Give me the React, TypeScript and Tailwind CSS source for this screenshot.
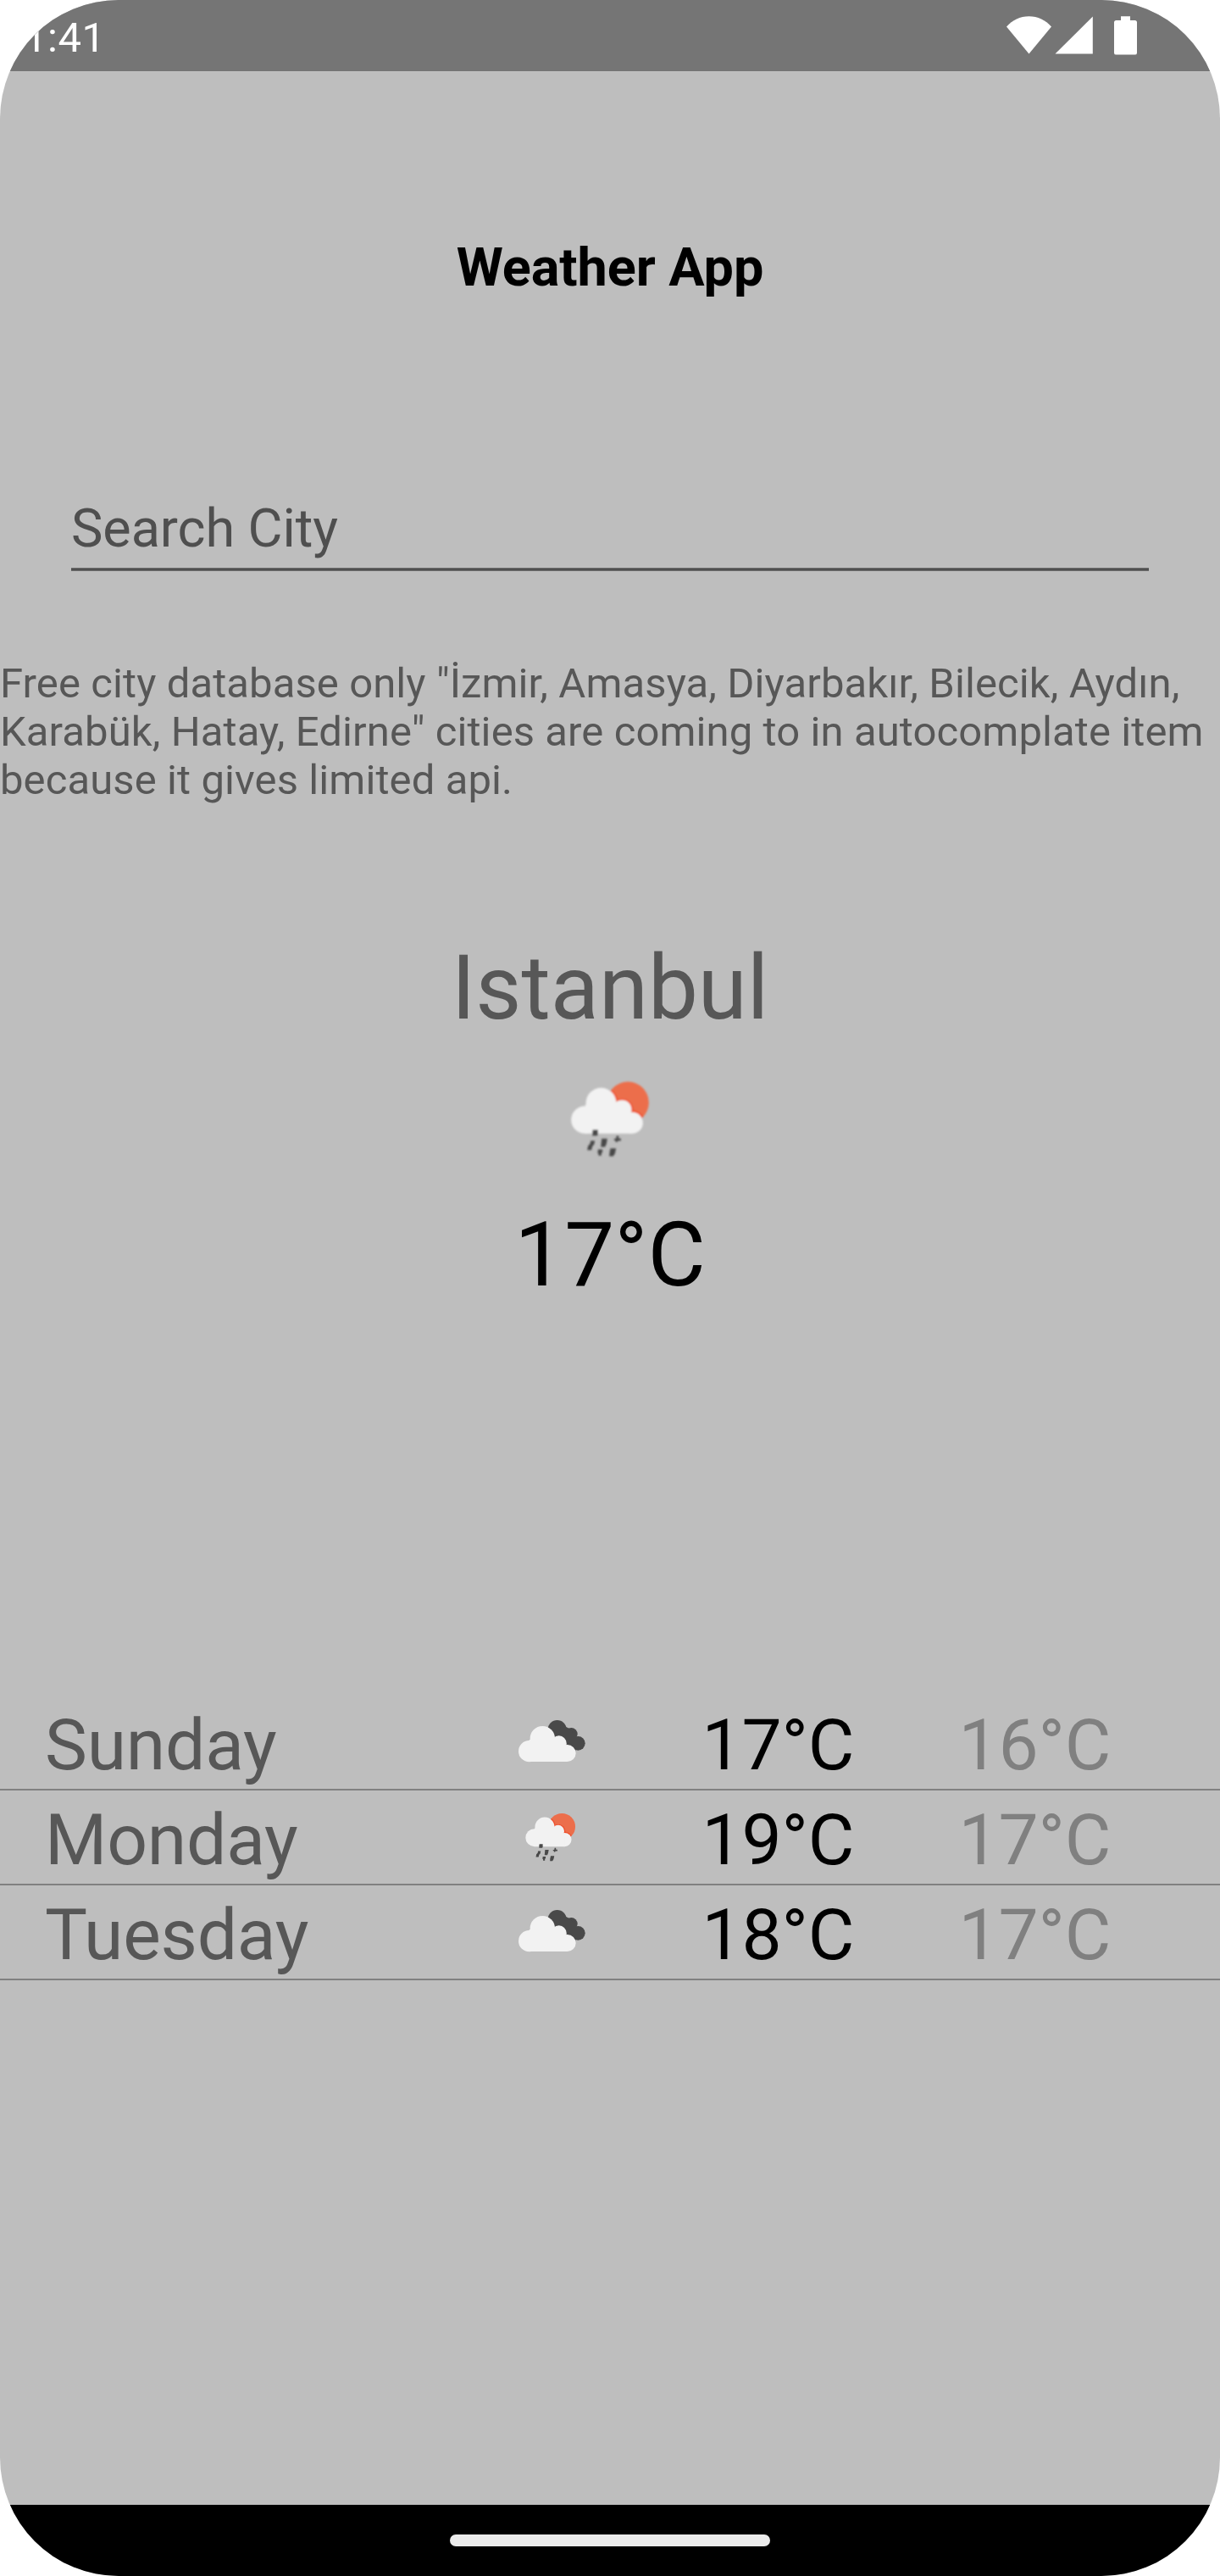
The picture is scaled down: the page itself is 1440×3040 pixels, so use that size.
import React from "react";

type Condition = "clouds" | "rain";

interface Day {
  name: string;
  condition: Condition;
  high: string;
  low: string;
}

const days: Day[] = [
  { name: "Sunday", condition: "clouds", high: "17°C", low: "16°C" },
  { name: "Monday", condition: "rain", high: "19°C", low: "17°C" },
  { name: "Tuesday", condition: "clouds", high: "18°C", low: "17°C" },
];

function RainIcon({ className }: { className: string }) {
  return (
    <svg viewBox="-22.5 -13.5 525 525" className={className} aria-hidden="true">
      <defs>
        <filter id="rain-soft" x="-5%" y="-5%" width="110%" height="110%">
          <feGaussianBlur stdDeviation="3" />
        </filter>
        <clipPath id="sun-clip">
          <circle cx="302" cy="182" r="74" />
        </clipPath>
      </defs>
      <g filter="url(#rain-soft)">
        <circle cx="302" cy="182" r="74" fill="#ec6e4c" />
        <g clipPath="url(#sun-clip)" fill="#ee4f2c">
          <circle cx="208" cy="184" r="59" />
          <circle cx="282" cy="208" r="39" />
          <circle cx="318" cy="254" r="44" />
        </g>
        <g fill="#f2f2f2">
          <circle cx="150" cy="243" r="49" />
          <circle cx="207" cy="184" r="54" />
          <circle cx="281" cy="207" r="34" />
          <circle cx="317" cy="254" r="38" />
          <path d="M151 190H300L317 240V292H151Z" />
        </g>
        <g fill="#484848">
          <path d="M178 278h18v15l-3 6h-17v-14z" />
          <path d="M170 317h15l-3 14-6 6-3 13h-15l3-15 7-7z" />
          <path d="M209 310h20l-3 18-5 11h-15z" />
          <path d="M262 299h7v10h8v8h-10l-3 5h-6v-6h-5v-6h7z" />
          <path d="M196 348h16v8l-4 6v8h-10v-8h-3z" />
          <path d="M240 344h20l-4 18-6 10h-14l1-14z" />
        </g>
      </g>
    </svg>
  );
}

function CloudsIcon({ className }: { className: string }) {
  return (
    <svg viewBox="42 37 336 336" className={className} aria-hidden="true">
      <defs>
        <filter id="clouds-soft" x="-5%" y="-5%" width="110%" height="110%">
          <feGaussianBlur stdDeviation="1.5" />
        </filter>
      </defs>
      <g filter="url(#clouds-soft)">
        <g fill="#484848">
          <circle cx="233" cy="154" r="33" />
          <circle cx="283" cy="170" r="22" />
          <circle cx="307" cy="203" r="25" />
          <path d="M245 135L275 150 300 175 300 228 240 190Z" />
        </g>
        <g fill="#f2f2f2">
          <circle cx="134" cy="231" r="38" />
          <circle cx="181" cy="186" r="44" />
          <circle cx="239" cy="203" r="27" />
          <circle cx="269" cy="238" r="30" />
          <path d="M134 190H252L269 225V268H134Z" />
        </g>
      </g>
    </svg>
  );
}

function WeatherIcon({ condition, className }: { condition: Condition; className: string }) {
  return condition === "rain" ? <RainIcon className={className} /> : <CloudsIcon className={className} />;
}

function StatusBar() {
  return (
    <header className="flex h-[84px] shrink-0 items-start justify-between bg-[#757575] pr-[98px] pl-[28px] text-white">
      <span className="mt-[16px] text-[49px] leading-[57px] tracking-[0.5px]">1:41</span>
      <div className="mt-[19px] flex items-start">
        <svg viewBox="0 0 53 45" className="h-[45px] w-[53px]" fill="currentColor" aria-hidden="true">
          <path d="M0 12.5C7 4.5 16 0.2 26.5 0.2S46 4.5 53 12.5L26.5 44.5Z" />
        </svg>
        <svg viewBox="0 0 45 45" className="ml-[4px] h-[45px] w-[45px]" fill="currentColor" aria-hidden="true">
          <path d="M0.5 44.6L44.8 0.4V44.6Z" />
        </svg>
        <svg viewBox="0 0 27 46" className="ml-[25px] h-[46px] w-[27px]" fill="currentColor" aria-hidden="true">
          <path d="M8 0.2H19V5H24.5A2.5 2.5 0 0 1 27 7.5V43A2.5 2.5 0 0 1 24.5 45.6H2.5A2.5 2.5 0 0 1 0 43V7.5A2.5 2.5 0 0 1 2.5 5H8Z" />
        </svg>
      </div>
    </header>
  );
}

export default function App() {
  return (
    <div className="h-[3040px] w-[1440px] bg-white">
      <div className="flex h-full flex-col overflow-hidden rounded-[140px] bg-[#bebebe] font-['Roboto',sans-serif] text-[#575757]">
        <StatusBar />
        <main className="flex flex-1 flex-col">
          <h1 className="mt-[195px] text-center text-[63px] leading-[74px] font-bold tracking-[-0.08px] text-black">
            Weather App
          </h1>

          <div className="mx-[84px] mt-[234px] flex h-[87px] flex-col justify-between">
            <span className="text-[63px] leading-[74px] tracking-[-0.08px] text-[#4f4f4f]">Search City</span>
            <div className="h-[4px] border-y border-[#6b6b6b] bg-[#4f4f4f]" />
          </div>

          <p className="mt-[104px] text-[49px] leading-[57px] tracking-[0.1px] whitespace-nowrap">
            Free city database only "İzmir, Amasya, Diyarbakır, Bilecik, Aydın,
            <br />
            Karabük, Hatay, Edirne" cities are coming to in autocomplate item
            <br />
            because it gives limited api.
          </p>

          <section className="mt-[156px] flex flex-col items-center text-[105px] leading-[123px]">
            <h2>Istanbul</h2>
            <RainIcon className="mt-[8px] mb-[9px] h-[175px] w-[175px]" />
            <p className="text-black">17°C</p>
          </section>

          <ul className="mt-[458px] flex flex-col text-[84px] tracking-[-0.2px]">
            {days.map((day) => (
              <li
                key={day.name}
                className="grid h-[112px] grid-cols-[541px_234.5px_303px_1fr] border-b-2 border-[#808080] pl-[53px] leading-[118px]"
              >
                <span>{day.name}</span>
                <WeatherIcon condition={day.condition} className="mt-[1px] h-[112px] w-[112px]" />
                <span className="text-black">{day.high}</span>
                <span className="text-[#808080]">{day.low}</span>
              </li>
            ))}
          </ul>
        </main>
        <footer className="flex h-[84px] shrink-0 items-center justify-center bg-black">
          <div className="h-[14px] w-[378px] rounded-full bg-[#ebebeb]" />
        </footer>
      </div>
    </div>
  );
}
